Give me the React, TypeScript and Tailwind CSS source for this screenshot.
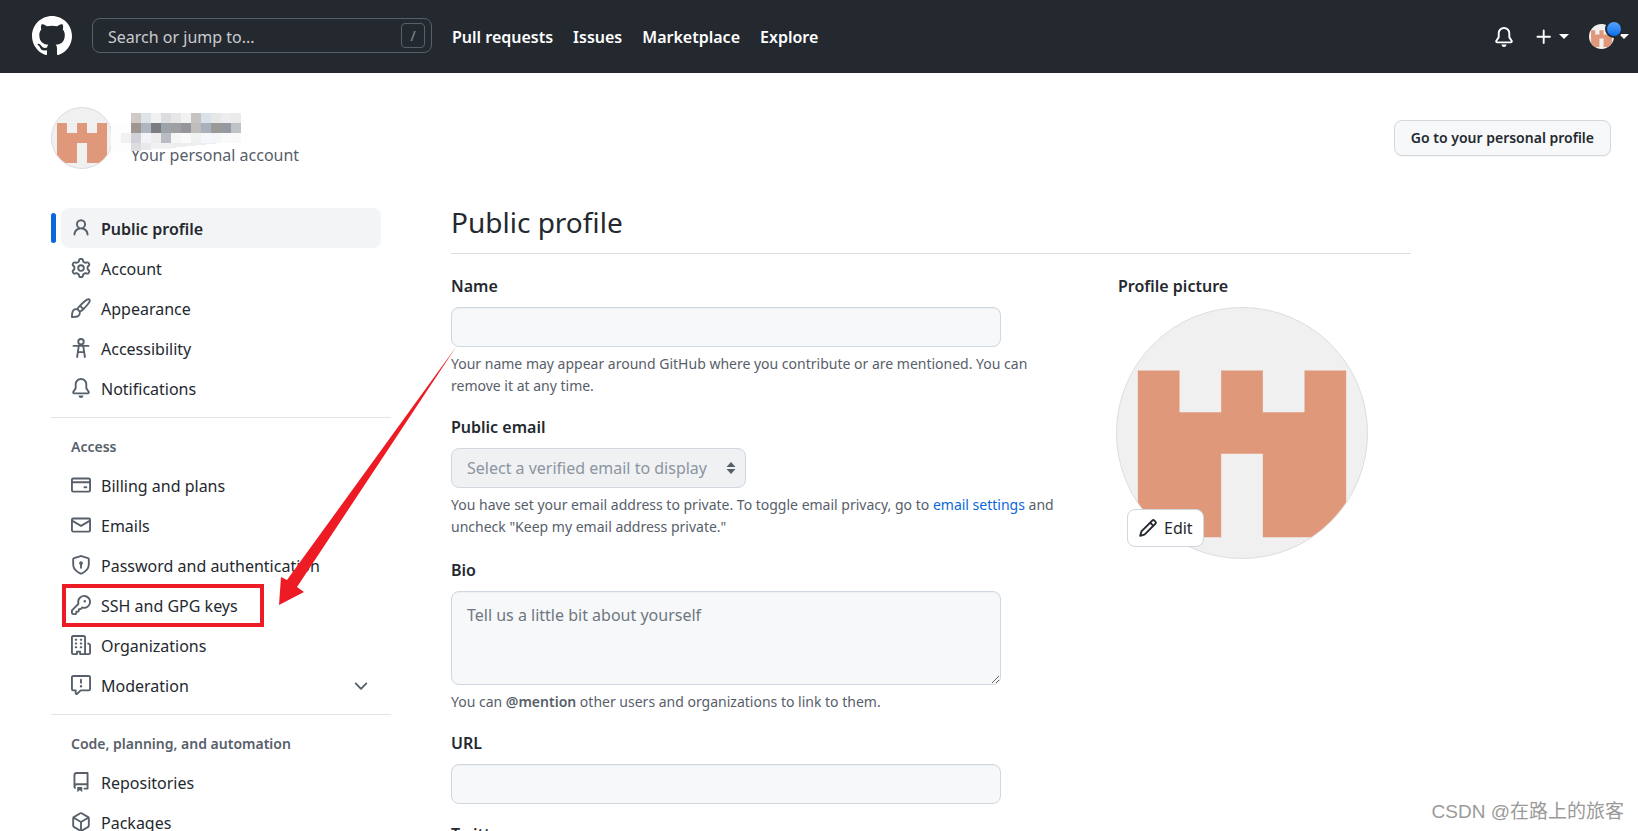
import type { ReactNode } from "react";

const icons = {
  github:
    "M8 0C3.58 0 0 3.58 0 8c0 3.54 2.29 6.53 5.47 7.59.4.07.55-.17.55-.38 0-.19-.01-.82-.01-1.49-2.01.37-2.53-.49-2.69-.94-.09-.23-.48-.94-.82-1.13-.28-.15-.68-.52-.01-.53.63-.01 1.08.58 1.23.82.72 1.21 1.87.87 2.33.66.07-.52.28-.87.51-1.07-1.78-.2-3.64-.89-3.64-3.95 0-.87.31-1.59.82-2.15-.08-.2-.36-1.02.08-2.12 0 0 .67-.21 2.2.82.64-.18 1.32-.27 2-.27.68 0 1.36.09 2 .27 1.53-1.04 2.2-.82 2.2-.82.44 1.1.16 1.92.08 2.12.51.56.82 1.27.82 2.15 0 3.07-1.87 3.75-3.65 3.95.29.25.54.73.54 1.48 0 1.07-.01 1.93-.01 2.2 0 .21.15.46.55.38A8.013 8.013 0 0016 8c0-4.42-3.58-8-8-8z",
  bell: "M8 16a2 2 0 001.985-1.75c.017-.137-.097-.25-.235-.25h-3.5c-.138 0-.252.113-.235.25A2 2 0 008 16zM3 5a5 5 0 0110 0v2.947c0 .05.015.098.042.139l1.703 2.555A1.518 1.518 0 0113.482 13H2.518a1.518 1.518 0 01-1.263-2.36l1.703-2.554A.25.25 0 003 7.947V5zm5-3.5A3.5 3.5 0 004.5 5v2.947c0 .346-.102.683-.294.97l-1.703 2.556a.018.018 0 00-.003.01l.001.006c0 .002.002.004.004.006a.017.017 0 00.006.004l.007.001h10.964l.007-.001a.016.016 0 00.006-.004.016.016 0 00.004-.006l.001-.007a.017.017 0 00-.003-.01l-1.703-2.554a1.75 1.75 0 01-.294-.97V5A3.5 3.5 0 008 1.5z",
  person:
    "M10.5 5a2.5 2.5 0 11-5 0 2.5 2.5 0 015 0zm.061 3.073a4 4 0 10-5.123 0 6.004 6.004 0 00-3.431 5.142.75.75 0 001.498.07 4.5 4.5 0 018.99 0 .75.75 0 101.498-.07 6.005 6.005 0 00-3.432-5.142z",
  gear: "M7.429 1.525a6.593 6.593 0 011.142 0c.036.003.108.036.137.146l.289 1.105c.147.56.55.967.997 1.189.174.086.341.183.501.29.417.278.97.423 1.53.27l1.102-.303c.11-.03.175.016.195.046.219.31.41.641.573.989.014.031.022.11-.059.19l-.815.806c-.411.406-.562.957-.53 1.456a4.588 4.588 0 010 .582c-.032.499.119 1.05.53 1.456l.815.806c.08.08.073.159.059.19a6.494 6.494 0 01-.573.99c-.02.029-.086.074-.195.045l-1.103-.303c-.559-.153-1.112-.008-1.529.27-.16.107-.327.204-.5.29-.449.222-.851.628-.998 1.189l-.289 1.105c-.029.11-.101.143-.137.146a6.613 6.613 0 01-1.142 0c-.036-.003-.108-.037-.137-.146l-.289-1.105c-.147-.56-.55-.967-.997-1.189a4.502 4.502 0 01-.501-.29c-.417-.278-.97-.423-1.53-.27l-1.102.303c-.11.03-.175-.016-.195-.046a6.492 6.492 0 01-.573-.989c-.014-.031-.022-.11.059-.19l.815-.806c.411-.406.562-.957.53-1.456a4.587 4.587 0 010-.582c.032-.499-.119-1.05-.53-1.456l-.815-.806c-.08-.08-.073-.159-.059-.19a6.44 6.44 0 01.573-.99c.02-.029.086-.075.195-.045l1.103.303c.559.153 1.112.008 1.529-.27.16-.107.327-.204.5-.29.449-.222.851-.628.998-1.189l.289-1.105c.029-.11.101-.143.137-.146zM8 0c-.236 0-.47.01-.701.03-.743.065-1.29.615-1.458 1.261l-.29 1.106c-.017.066-.078.158-.211.224a5.994 5.994 0 00-.668.386c-.123.082-.233.09-.3.071L3.27 2.776c-.644-.177-1.392.02-1.82.63a7.977 7.977 0 00-.704 1.217c-.315.675-.111 1.422.363 1.891l.815.806c.05.048.098.147.088.294a6.084 6.084 0 000 .772c.01.147-.038.246-.088.294l-.815.806c-.474.469-.678 1.216-.363 1.891.2.428.436.835.704 1.218.428.609 1.176.806 1.82.63l1.103-.303c.066-.019.176-.011.299.071.213.143.436.272.668.386.133.066.194.158.212.224l.289 1.106c.169.646.715 1.196 1.458 1.26a8.094 8.094 0 001.402 0c.743-.064 1.29-.614 1.458-1.26l.29-1.106c.017-.066.078-.158.211-.224a5.98 5.98 0 00.668-.386c.123-.082.233-.09.3-.071l1.102.302c.644.177 1.392-.02 1.82-.63.268-.382.505-.789.704-1.217.315-.675.111-1.422-.364-1.891l-.814-.806c-.05-.048-.098-.147-.088-.294a6.1 6.1 0 000-.772c-.01-.147.039-.246.088-.294l.814-.806c.475-.469.679-1.216.364-1.891a7.992 7.992 0 00-.704-1.218c-.428-.609-1.176-.806-1.82-.63l-1.103.303c-.066.019-.176.011-.299-.071a5.991 5.991 0 00-.668-.386c-.133-.066-.194-.158-.212-.224L10.16 1.29C9.99.645 9.444.095 8.701.031A8.094 8.094 0 008 0zm1.5 8a1.5 1.5 0 11-3 0 1.5 1.5 0 013 0zM11 8a3 3 0 11-6 0 3 3 0 016 0z",
  paintbrush:
    "M11.134 1.535C9.722 2.562 8.16 4.057 6.889 5.312 5.8 6.387 5.041 7.401 4.575 8.294a3.745 3.745 0 00-3.227 1.054c-.43.431-.69 1.066-.86 1.657a11.982 11.982 0 00-.358 1.914A21.263 21.263 0 000 15.203v.054l.75-.007-.007.75h.054a14.404 14.404 0 00.654-.012 21.243 21.243 0 001.63-.118c.62-.07 1.3-.18 1.914-.357.592-.17 1.226-.43 1.657-.861a3.745 3.745 0 001.055-3.217c.908-.461 1.942-1.216 3.04-2.3 1.279-1.262 2.764-2.825 3.775-4.249.501-.706.923-1.428 1.125-2.096.2-.659.235-1.469-.368-2.07-.606-.607-1.42-.55-2.069-.34-.66.213-1.376.646-2.076 1.155zm-3.95 8.48a3.76 3.76 0 00-1.19-1.192 9.758 9.758 0 011.161-1.607l1.658 1.658a9.853 9.853 0 01-1.63 1.142zM.742 16l.007-.75-.75.008A.75.75 0 00.743 16zM12.016 2.749c-1.224.89-2.605 2.189-3.822 3.384l1.718 1.718c1.21-1.205 2.51-2.597 3.387-3.833.47-.662.78-1.227.912-1.662.134-.444.032-.551.009-.575h-.001V1.78c-.014-.014-.112-.113-.548.027-.432.14-.995.462-1.655.942zM1.62 13.089a19.56 19.56 0 00-.104 1.395 19.55 19.55 0 001.396-.104 10.528 10.528 0 001.668-.309c.526-.151.856-.325 1.011-.48a2.25 2.25 0 00-3.182-3.182c-.155.155-.329.485-.48 1.01a10.515 10.515 0 00-.309 1.67z",
  card: "M10.75 9a.75.75 0 000 1.5h1.5a.75.75 0 000-1.5h-1.5zM0 3.75C0 2.784.784 2 1.75 2h12.5c.966 0 1.75.784 1.75 1.75v8.5A1.75 1.75 0 0114.25 14H1.75A1.75 1.75 0 010 12.25v-8.5zm14.5 0V5h-13V3.75a.25.25 0 01.25-.25h12.5a.25.25 0 01.25.25zm0 2.75h-13v5.75c0 .138.112.25.25.25h12.5a.25.25 0 00.25-.25V6.5z",
  mail: "M1.75 2A1.75 1.75 0 000 3.75v.736a.75.75 0 000 .027v7.737C0 13.216.784 14 1.75 14h12.5A1.75 1.75 0 0016 12.25v-8.5A1.75 1.75 0 0014.25 2H1.75zM14.5 4.07v-.32a.25.25 0 00-.25-.25H1.75a.25.25 0 00-.25.25v.32L8 7.88l6.5-3.81zm-13 1.74v6.441c0 .138.112.25.25.25h12.5a.25.25 0 00.25-.25V5.809L8.38 9.397a.75.75 0 01-.76 0L1.5 5.809z",
  shield:
    "M8.533.133a1.75 1.75 0 00-1.066 0l-5.25 1.68A1.75 1.75 0 001 3.48V7c0 1.566.32 3.182 1.303 4.682.983 1.498 2.585 2.813 5.032 3.855a1.7 1.7 0 001.33 0c2.447-1.042 4.049-2.357 5.032-3.855C14.68 10.182 15 8.566 15 7V3.48a1.75 1.75 0 00-1.217-1.667L8.533.133zm-.61 1.429a.25.25 0 01.153 0l5.25 1.68a.25.25 0 01.174.238V7c0 1.358-.275 2.666-1.057 3.86-.784 1.194-2.121 2.34-4.366 3.297a.2.2 0 01-.154 0c-2.245-.956-3.582-2.104-4.366-3.298C2.775 9.666 2.5 8.36 2.5 7V3.48a.25.25 0 01.174-.237l5.25-1.68zM9.5 6.5a1.5 1.5 0 01-.75 1.3v2.45a.75.75 0 01-1.5 0V7.8A1.5 1.5 0 119.5 6.5z",
  key: "M6.5 5.5a4 4 0 112.731 3.795.75.75 0 00-.768.18L7.44 10.5H6.25a.75.75 0 00-.75.75v1.19l-.06.06H4.25a.75.75 0 00-.75.75v1.19l-.06.06H1.75a.25.25 0 01-.25-.25v-1.69l5.024-5.023a.75.75 0 00.181-.768A3.995 3.995 0 016.5 5.5zm4-5.5a5.5 5.5 0 00-5.348 6.788L.22 11.72a.75.75 0 00-.22.53v2C0 15.216.784 16 1.75 16h2a.75.75 0 00.53-.22l.5-.5a.75.75 0 00.22-.53V14h.75a.75.75 0 00.53-.22l.5-.5a.75.75 0 00.22-.53V12h.75a.75.75 0 00.53-.22l.932-.932A5.5 5.5 0 1010.5 0zm.5 6a1 1 0 100-2 1 1 0 000 2z",
  organization:
    "M1.5 14.25c0 .138.112.25.25.25H4v-1.25a.75.75 0 01.75-.75h2.5a.75.75 0 01.75.75v1.25h2.25a.25.25 0 00.25-.25V1.75a.25.25 0 00-.25-.25h-8.5a.25.25 0 00-.25.25v12.5zM1.75 16A1.75 1.75 0 010 14.25V1.75C0 .784.784 0 1.75 0h8.5C11.216 0 12 .784 12 1.75v12.5c0 .085-.006.168-.018.25h2.268a.25.25 0 00.25-.25V8.285a.25.25 0 00-.111-.208l-1.055-.703a.75.75 0 11.832-1.248l1.055.703c.487.325.779.871.779 1.456v5.965A1.75 1.75 0 0114.25 16h-3.5a.75.75 0 01-.197-.026c-.099.017-.2.026-.303.026h-3a.75.75 0 01-.75-.75V14h-1v1.25a.75.75 0 01-.75.75h-3zM3 3.75A.75.75 0 013.75 3h.5a.75.75 0 010 1.5h-.5A.75.75 0 013 3.75zM3.75 6a.75.75 0 000 1.5h.5a.75.75 0 000-1.5h-.5zM3 9.75A.75.75 0 013.75 9h.5a.75.75 0 010 1.5h-.5A.75.75 0 013 9.75zM7.75 9a.75.75 0 000 1.5h.5a.75.75 0 000-1.5h-.5zM7 6.75A.75.75 0 017.75 6h.5a.75.75 0 010 1.5h-.5A.75.75 0 017 6.75zM7.75 3a.75.75 0 000 1.5h.5a.75.75 0 000-1.5h-.5z",
  report:
    "M1.75 1.5a.25.25 0 00-.25.25v9.5c0 .138.112.25.25.25h2a.75.75 0 01.75.75v2.19l2.72-2.72a.75.75 0 01.53-.22h6.5a.25.25 0 00.25-.25v-9.5a.25.25 0 00-.25-.25H1.75zM0 1.75C0 .784.784 0 1.75 0h12.5C15.216 0 16 .784 16 1.75v9.5A1.75 1.75 0 0114.25 13H8.06l-2.573 2.573A1.457 1.457 0 013 14.543V13H1.75A1.75 1.75 0 010 11.25v-9.5zM9 9a1 1 0 11-2 0 1 1 0 012 0zm-.25-5.25a.75.75 0 00-1.5 0v2.5a.75.75 0 001.5 0v-2.5z",
  repo: "M2 2.5A2.5 2.5 0 014.5 0h8.75a.75.75 0 01.75.75v12.5a.75.75 0 01-.75.75h-2.5a.75.75 0 110-1.5h1.75v-2h-8a1 1 0 00-.714 1.7.75.75 0 01-1.072 1.05A2.495 2.495 0 012 11.5v-9zm10.5-1V9h-8c-.356 0-.694.074-1 .208V2.5a1 1 0 011-1h8zM5 12.25v3.25a.25.25 0 00.4.2l1.45-1.087a.25.25 0 01.3 0L8.6 15.7a.25.25 0 00.4-.2v-3.25a.25.25 0 00-.25-.25h-3.5a.25.25 0 00-.25.25z",
  package:
    "M8.878.392a1.75 1.75 0 00-1.756 0l-5.25 3.045A1.75 1.75 0 001 4.951v6.098c0 .624.332 1.2.872 1.514l5.25 3.045a1.75 1.75 0 001.756 0l5.25-3.045c.54-.313.872-.89.872-1.514V4.951c0-.624-.332-1.2-.872-1.514L8.878.392zM7.875 1.69a.25.25 0 01.25 0l4.63 2.685L8 7.133 3.245 4.375l4.63-2.685zM2.5 5.677v5.372c0 .09.047.171.125.216l4.625 2.683V8.432L2.5 5.677zm6.25 8.271l4.625-2.683a.25.25 0 00.125-.216V5.677L8.75 8.432v5.516z",
  pencil:
    "M11.013 1.427a1.75 1.75 0 012.474 0l1.086 1.086a1.75 1.75 0 010 2.474l-8.61 8.61c-.21.21-.47.364-.756.445l-3.251.93a.75.75 0 01-.927-.928l.929-3.25a1.75 1.75 0 01.445-.758l8.61-8.61zm1.414 1.06a.25.25 0 00-.354 0L10.811 3.75l1.439 1.44 1.263-1.263a.25.25 0 000-.354l-1.086-1.086zM11.189 6.25L9.75 4.81l-6.286 6.287a.25.25 0 00-.064.108l-.558 1.953 1.953-.558a.249.249 0 00.108-.064l6.286-6.286z",
  plus: "M7.75 2a.75.75 0 01.75.75V7h4.25a.75.75 0 110 1.5H8.5v4.25a.75.75 0 11-1.5 0V8.5H2.75a.75.75 0 010-1.5H7V2.75A.75.75 0 017.75 2z",
  chevron:
    "M12.78 6.22a.75.75 0 010 1.06l-4.25 4.25a.75.75 0 01-1.06 0L3.22 7.28a.75.75 0 011.06-1.06L8 9.94l3.72-3.72a.75.75 0 011.06 0z",
};

type IconName = keyof typeof icons | "accessibility";

function Icon({ name, className = "size-5" }: { name: IconName; className?: string }) {
  if (name === "accessibility") {
    return (
      <svg viewBox="0 0 16 16" aria-hidden="true" className={`shrink-0 ${className}`} fill="none" stroke="currentColor" strokeWidth="1.5" strokeLinecap="round" strokeLinejoin="round">
        <circle cx="8" cy="3" r="2.2" />
        <path d="M2 6.3h12M6.2 6.5 4.9 15.2M9.8 6.5l1.3 8.7M5.9 11.3h4.2" />
      </svg>
    );
  }
  return (
    <svg viewBox="0 0 16 16" aria-hidden="true" className={`shrink-0 ${className}`} fill="currentColor" fillRule="evenodd">
      <path d={icons[name]} />
    </svg>
  );
}

function Caret() {
  return (
    <svg viewBox="0 0 10 5" aria-hidden="true" className="h-[5px] w-[10px] shrink-0" fill="currentColor">
      <path d="M0 0h10L5 5z" />
    </svg>
  );
}

function Identicon({ className }: { className: string }) {
  return (
    <svg viewBox="0 0 12 12" role="img" aria-label="Avatar" className={`shrink-0 rounded-full bg-[#f0f0f0] ${className}`}>
      <path fill="#df987a" d="M1 3h2v2h2V3h2v2h2V3h2v8H7V7H5v4H1z" />
    </svg>
  );
}

const mosaic = [
  ["#d0cac7", "#dfe4e8", "#eff1f2", "#dcdddf", "#e7e7e8", "#f1f2f2", "#c5c4c3", "#dae1e8", "#e7e7e8", "#ededed", "#e9eaec"],
  ["#a1968f", "#aeb7c0", "#7b7c83", "#9ca4a9", "#a0a0a0", "#94969c", "#bfbdb9", "#a8b1bd", "#9b9a99", "#9799a2", "#bfc3c5"],
  ["#d0d2d8", "#f2f3f6", "#ececec", "#b9bcc2", "#f6f5f7", "#fafafa", "#eff2f1", "#f6f7fa", "#f4f5f7", "#fbfafb", "#f9f9f9"],
];

function HiddenName() {
  return (
    <svg viewBox="0 0 130 38" aria-hidden="true" className="absolute -left-5 top-1 h-[38px] w-[130px]" shapeRendering="crispEdges">
      <rect x="0" y="10" width="20" height="28" fill="#fdfdfd" />
      <rect x="10" y="20" width="10" height="10" fill="#f3f1f0" />
      {mosaic.map((row, y) => row.map((c, x) => <rect key={`${x}-${y}`} x={20 + x * 10} y={y * 10} width="10" height="10" fill={c} />))}
      <path d="M20 30h10v8H20z" fill="#dcdbe0" />
      <path d="M30 30h10v7H30z" fill="#e9e8eb" />
      <path d="M40 30h20v6H40z" fill="#f1f1f4" />
      <path d="M60 30h50l-50 5z" fill="#eeeef0" />
    </svg>
  );
}

function NavItem({ icon, label, active, expandable }: { icon: IconName; label: string; active?: boolean; expandable?: boolean }) {
  return (
    <li className="relative px-[10px]">
      {active && <span className="absolute left-0 top-[5px] h-[30px] w-[5px] rounded-md bg-[#0969da]" />}
      <a
        href="#"
        aria-current={active ? "page" : undefined}
        className={`flex h-10 items-center gap-[10px] rounded-lg px-[10px] ${active ? "bg-[#f3f4f6] font-semibold" : ""}`}
      >
        <Icon name={icon} className="size-5 text-[#57606a]" />
        <span className="flex-1 whitespace-nowrap pt-[2px]">{label}</span>
        {expandable && <Icon name="chevron" className="size-5 text-[#57606a]" />}
      </a>
    </li>
  );
}

function NavGroup({ title, children }: { title: string; children: ReactNode }) {
  return (
    <section className="mt-[9px] border-t border-[#e3e6e9] pt-[9px]">
      <h3 className="flex h-[38px] items-center px-5 pt-[2px] text-sm font-semibold text-[#57606a]">{title}</h3>
      <ul>{children}</ul>
    </section>
  );
}

const field = "w-full rounded-lg border border-[#d0d7de] bg-[#f6f8fa] px-[15px] shadow-[inset_0_1px_0_rgba(208,215,222,0.2)]";
const label = "block text-base/6 font-semibold";
const hint = "mt-[6px] text-sm/[22px] text-[#57606a]";

export default function App() {
  return (
    <div className="relative h-screen overflow-hidden bg-white font-['Noto_Sans','Noto_Sans_CJK_SC',sans-serif] text-base text-[#24292f]">
      <header className="flex h-[73px] items-center bg-[#24292f] pb-[2px] pl-8 pr-[9px] text-white">
        <a href="#" aria-label="Homepage" className="mr-5">
          <Icon name="github" className="size-10" />
        </a>
        <label className="mr-5 flex h-[35px] w-[340px] items-center rounded-lg border border-[#57606a] pl-[15px] pr-[6px]">
          <input type="text" aria-label="Search" placeholder="Search or jump to..." className="min-w-0 flex-1 bg-transparent pt-[2px] placeholder:text-[#c9ccd0]" />
          <kbd className="flex h-[25px] w-6 items-center justify-center rounded border border-[#57606a] font-['Noto_Sans',sans-serif] text-sm text-[#8c959f]">/</kbd>
        </label>
        <nav className="flex gap-5 pt-[2px] font-semibold">
          <a href="#">Pull requests</a>
          <a href="#">Issues</a>
          <a href="#">Marketplace</a>
          <a href="#">Explore</a>
        </nav>
        <div className="ml-auto flex items-center pt-[2px]">
          <button aria-label="Notifications" className="mr-5">
            <Icon name="bell" />
          </button>
          <button aria-label="Create new" className="mr-5 flex items-center gap-[5px]">
            <Icon name="plus" />
            <Caret />
          </button>
          <button aria-label="Account menu" className="relative flex items-center gap-[5px]">
            <Identicon className="size-[25px]" />
            <span className="absolute -top-1 left-4 size-[18px] rounded-full border-2 border-[#24292f] bg-linear-to-b from-[#54a3ff] to-[#006eed]" />
            <Caret />
          </button>
        </div>
      </header>

      <div className="mx-auto max-w-[1600px] pl-8 pr-2">
        <div className="flex items-center justify-between pt-[34px]">
          <div className="flex items-center gap-[18px]">
            <Identicon className="size-[62px] border border-[#dcdde0]" />
            <div className="relative pt-[34px]">
              <p className="text-[#57606a]">Your personal account</p>
              <HiddenName />
            </div>
          </div>
          <button className="h-9 rounded-lg border border-[#d5d8da] bg-[#f6f8fa] px-4 text-sm font-semibold shadow-[0_1px_0_rgba(27,31,36,0.04)]">
            Go to your personal profile
          </button>
        </div>

        <div className="flex gap-[60px] pt-[39px]">
          <nav aria-label="Settings" className="w-[340px] shrink-0">
            <ul>
              <NavItem icon="person" label="Public profile" active />
              <NavItem icon="gear" label="Account" />
              <NavItem icon="paintbrush" label="Appearance" />
              <NavItem icon="accessibility" label="Accessibility" />
              <NavItem icon="bell" label="Notifications" />
            </ul>
            <NavGroup title="Access">
              <NavItem icon="card" label="Billing and plans" />
              <NavItem icon="mail" label="Emails" />
              <NavItem icon="shield" label="Password and authentication" />
              <NavItem icon="key" label="SSH and GPG keys" />
              <NavItem icon="organization" label="Organizations" />
              <NavItem icon="report" label="Moderation" expandable />
            </NavGroup>
            <NavGroup title="Code, planning, and automation">
              <NavItem icon="repo" label="Repositories" />
              <NavItem icon="package" label="Packages" />
            </NavGroup>
          </nav>

          <main className="max-w-[960px] flex-1">
            <h2 className="border-b border-[#d8dee4] pb-[17px] text-[28px]/7">Public profile</h2>
            <div className="flex justify-between pt-5">
              <form className="w-[620px]">
                <div>
                  <label htmlFor="name" className={label}>Name</label>
                  <input id="name" type="text" className={`mt-[9px] block h-10 max-w-[550px] ${field}`} />
                  <p className={hint}>
                    Your name may appear around GitHub where you contribute or are mentioned. You can remove it at any time.
                  </p>
                </div>
                <div className="mt-[18px]">
                  <label htmlFor="email" className={label}>Public email</label>
                  <div className="relative mt-[9px] w-[295px]">
                    <select id="email" disabled className="h-10 w-full appearance-none rounded-lg border border-[#d0d7de] bg-[#eff1f3] pl-[15px] pr-6 text-[#8c959f] opacity-100">
                      <option>Select a verified email to display</option>
                    </select>
                    <svg viewBox="0 0 10 12" aria-hidden="true" className="pointer-events-none absolute right-[10px] top-[14px] h-3 w-[10px]" fill="#57606a">
                      <path d="M5 0l4.5 5h-9zM5 12l4.5-5h-9z" />
                    </svg>
                  </div>
                  <p className={hint}>
                    You have set your email address to private. To toggle email privacy, go to{" "}
                    <a href="#" className="text-[#0969da]">email settings</a> and uncheck "Keep my email address private."
                  </p>
                </div>
                <div className="mt-5">
                  <label htmlFor="bio" className={label}>Bio</label>
                  <textarea id="bio" placeholder="Tell us a little bit about yourself" className={`mt-[9px] block h-[94px] max-w-[550px] py-[11px] placeholder:text-[#6e7781] ${field}`} />
                  <p className={hint}>
                    You can <strong className="font-semibold">@mention</strong> other users and organizations to link to them.
                  </p>
                </div>
                <div className="mt-[18px]">
                  <label htmlFor="url" className={label}>URL</label>
                  <input id="url" type="text" className={`mt-[9px] block h-10 max-w-[550px] ${field}`} />
                </div>
                <div className="mt-[18px]">
                  <label htmlFor="twitter" className={label}>Twitter username</label>
                  <input id="twitter" type="text" className={`mt-[9px] block h-10 max-w-[550px] ${field}`} />
                </div>
              </form>
              <div className="w-[295px]">
                <h3 className={`${label} px-[2px]`}>Profile picture</h3>
                <div className="relative mt-[9px] w-[252px]">
                  <Identicon className="size-[252px] border border-[#dcdde0]" />
                  <button className="absolute bottom-3 left-[11px] flex h-[38px] items-center gap-[6px] rounded-lg border border-[#d0d7de] bg-white px-[10px]">
                    <Icon name="pencil" />
                    Edit
                  </button>
                </div>
              </div>
            </div>
          </main>
        </div>
      </div>

      <svg viewBox="0 0 400 300" aria-hidden="true" className="pointer-events-none absolute left-[60px] top-[340px] h-[300px] w-[400px]">
        <rect x="4" y="246" width="198" height="39" fill="none" stroke="#ed1c24" strokeWidth="4" />
        <path fill="#ed1c24" d="M396 7 227 240 221 237 219 265 244 252 237 247Z" />
      </svg>
      <div className="absolute bottom-[5px] right-[14px] font-['Liberation_Sans','Noto_Sans_CJK_SC',sans-serif] text-[19px]/7 text-[#9a9a9a]">
        CSDN @在路上的旅客
      </div>
    </div>
  );
}
